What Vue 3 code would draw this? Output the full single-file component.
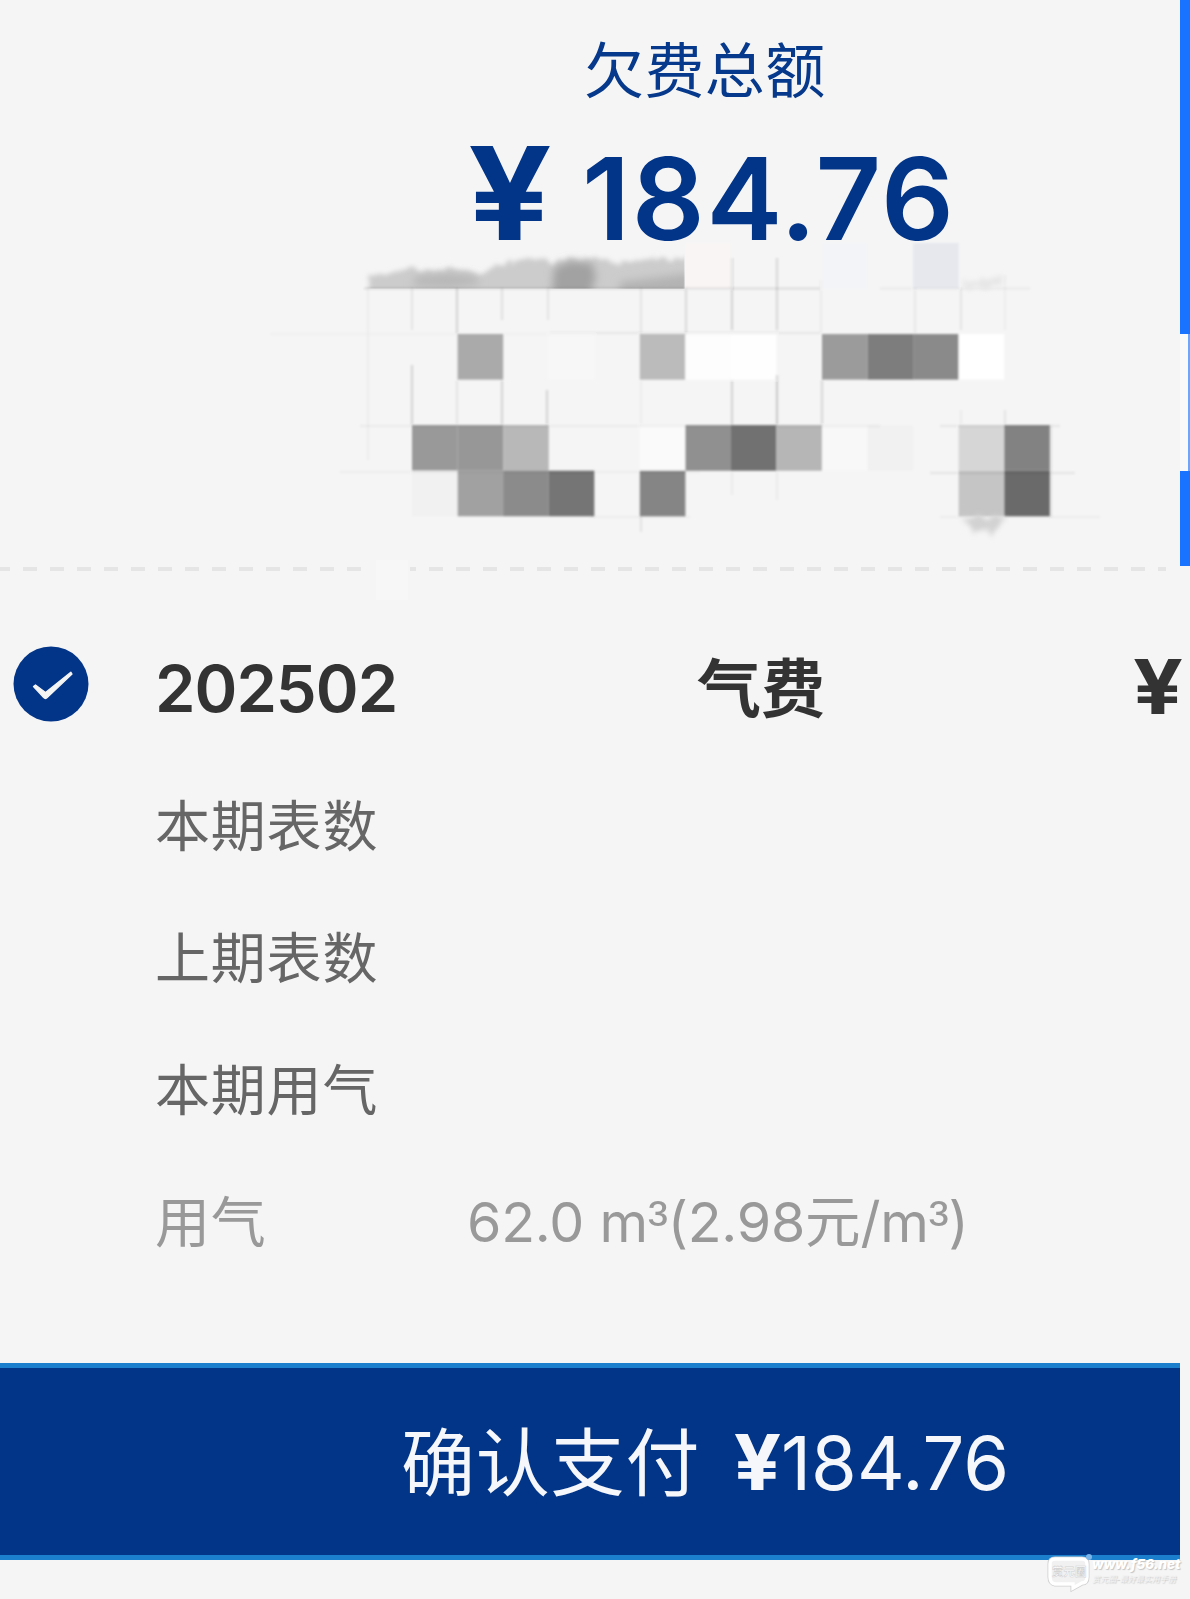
<script setup>
const cell = 45.55
const originX = 366.5
const originY = 288.5

// column, row, shade
const blocks = [
  [2, 1, '#aaaaaa'], [6, 1, '#bbbbbb'], [7, 1, '#fdfdfd'], [8, 1, '#fefefe'], [4, 1, '#f7f7f7'],
  [10, 1, '#9b9b9b'], [11, 1, '#7d7d7d'], [12, 1, '#8a8a8a'], [13, 1, '#ffffff'],
  [1, 3, '#999999'], [2, 3, '#979797'], [3, 3, '#b8b8b8'], [6, 3, '#fafafa'], [7, 3, '#909090'],
  [8, 3, '#717171'], [9, 3, '#b6b6b6'], [10, 3, '#f8f8f8'], [11, 3, '#f1f1f1'], [13, 3, '#d6d6d6'],
  [14, 3, '#828282'], [1, 4, '#f1f1f1'], [2, 4, '#a1a1a1'], [3, 4, '#8b8b8b'], [4, 4, '#747474'],
  [6, 4, '#858585'], [13, 4, '#c5c5c5'], [14, 4, '#6b6b6b'],
  [7, -1, '#f9f5f4'], [10, -1, '#f3f4f7'], [12, -1, '#e6e8ee'],
].map(([c, r, fill]) => ({ x: originX + c * cell, y: originY + r * cell, fill }))

// x1, y1, x2, y2, opacity
const seams = [
  [364, 288.5, 820, 288.5, 0.09], [880, 288.5, 1030, 288.5, 0.04], [550, 333, 820, 333, 0.05], [270, 334, 550, 334, 0.015],
  [360, 426, 880, 426, 0.04], [940, 426, 1060, 426, 0.05], [340, 472, 700, 472, 0.03],
  [930, 473, 1075, 473, 0.06], [590, 517, 690, 517, 0.03], [940, 517, 1100, 517, 0.03],
  [368, 288, 368, 460, 0.03], [412, 288, 412, 330, 0.06], [412, 365, 412, 425, 0.12],
  [457, 288, 457, 334, 0.12], [457, 380, 457, 425, 0.06], [502, 288, 502, 320, 0.08],
  [502, 380, 502, 425, 0.12], [548, 288, 548, 320, 0.06], [547, 390, 547, 425, 0.12],
  [641, 288, 641, 334, 0.06], [641, 380, 641, 425, 0.03], [641, 516, 641, 532, 0.07],
  [686, 288, 686, 334, 0.1], [732, 258, 732, 330, 0.13], [732, 380, 732, 425, 0.13],
  [777, 258, 777, 330, 0.11], [777, 375, 777, 425, 0.16], [821, 280, 821, 334, 0.04],
  [822, 380, 822, 425, 0.11], [915, 288, 915, 334, 0.05], [961, 288, 961, 330, 0.06],
  [1005, 275, 1005, 330, 0.03], [732, 471, 732, 495, 0.04], [777, 471, 777, 500, 0.04],
  [1051, 425, 1051, 517, 0.08], [1005, 410, 1005, 425, 0.06], [961, 410, 961, 425, 0.04],
]

const meterRows = ['本期表数', '上期表数', '本期用气']
</script>

<template>
  <div class="page">
    <main class="bill">
      <section class="summary">
        <div class="title">欠费总额</div>
        <div class="total"><span class="yen">¥</span><span class="sum">184.76</span></div>
        <svg class="mosaic" width="1180" height="330" viewBox="0 240 1180 330">
          <defs>
            <filter id="soft" x="-10%" y="-50%" width="120%" height="200%"><feGaussianBlur stdDeviation="4" /></filter>
            <filter id="rough" x="-10%" y="-50%" width="120%" height="200%">
              <feTurbulence type="fractalNoise" baseFrequency="0.12" numOctaves="3" seed="4" result="n" />
              <feDisplacementMap in="SourceGraphic" in2="n" scale="14" xChannelSelector="R" yChannelSelector="G" />
              <feGaussianBlur stdDeviation="2.4" />
            </filter>
            <filter id="edge"><feGaussianBlur stdDeviation="0.9" /></filter>
            <clipPath id="above"><rect x="360" y="245" width="324.5" height="43.5" /></clipPath>
          </defs>
          <g clip-path="url(#above)">
            <g filter="url(#rough)">
              <path d="M370 277l22-5 18-3 24 2 22-2 24 4 24-9 24-5 24 2 24-3 22 2 20 4 20-3 24-2 58 0v50H370z" fill="#cccccc" />
            </g>
            <g filter="url(#soft)">
              <path d="M416 276l30-3 30 3 4 8-30 4-38-2z" fill="#b8b8b8" />
              <path d="M554 268l16-7 22 2 4 14-6 18-38 0z" fill="#a2a2a2" />
              <path d="M620 282l80-10v24h-80z" fill="#b3b3b3" />
            </g>
          </g>
          <g filter="url(#edge)">
            <rect v-for="(b, i) in blocks" :key="i" :x="b.x" :y="b.y" width="45.6" height="45.6" :fill="b.fill" />
            <path v-for="(s, i) in seams" :key="'s' + i" :d="`M${s[0]} ${s[1]}L${s[2]} ${s[3]}`" stroke="#000" stroke-width="2.4" :stroke-opacity="s[4]" />
          </g>
          <g filter="url(#rough)" fill="#d2d2d2">
            <path d="M962 283l20-5 21-3v12h-41z" fill="#e6e6e6" />
            <path d="M962 517h42l-7 15-7 4-5-8-10 6-7-7z" />
          </g>
        </svg>
      </section>
      <svg class="rule" width="1180" height="44" viewBox="0 558 1180 44">
        <path d="M-4 569H361M410 569H416M429 569H1166" stroke="#e5e5e5" stroke-width="4" stroke-dasharray="14 13" />
        <rect x="376" y="560" width="32" height="40" fill="#f7f7f7" />
      </svg>
      <section class="period">
        <svg class="check" width="76" height="76" viewBox="0 0 76 76">
          <circle cx="38" cy="38" r="37.5" fill="#023488" />
          <path d="M20.5 40.5L22.5 39L32.5 46.6L57.8 26.2L59 28L34.2 51.6Q32.5 53.4 30.7 51.6Z" fill="#f5f5f5" stroke="#f5f5f5" stroke-width="1.3" stroke-linejoin="round" />
        </svg>
        <span class="month">202502</span>
        <span class="kind">气费</span>
        <span class="mark">¥</span>
      </section>
      <section class="details">
        <div v-for="row in meterRows" :key="row" class="row">{{ row }}</div>
        <div class="row usage"><span class="name">用气</span><span class="rate">62.0 m<span class="cube">³</span>(2.98元/m<span class="cube">³</span>)</span></div>
      </section>
      <button class="pay"><span class="action">确认支付</span><span class="pay-yen">¥</span><span class="pay-sum">184.76</span></button>
    </main>
    <aside class="rail">
      <i class="bar upper"></i>
      <i class="gap"></i>
      <i class="bar lower"></i>
    </aside>
    <div class="stamp">
      <svg width="44" height="36" viewBox="0 0 44 36">
        <path d="M7 3H34Q39 3 39 8V21Q39 27 34 27L25 32V28H7Q2 27 2 21V8Q2 3 7 3Z" fill="none" stroke="#cfcfcf" stroke-width="5" />
        <path d="M7 3H34Q39 3 39 8V21Q39 27 34 27L25 32V28H7Q2 27 2 21V8Q2 3 7 3Z" fill="#f1f1f1" stroke="#fff" stroke-width="3.4" />
        <circle cx="41" cy="1" r="3" fill="#7bb5ea" />
        <text x="4" y="20" font-size="11.5">赏元圈</text>
      </svg>
      <div class="site"><b>www.f56.net</b><small>赏元圈-最好最实用手册</small></div>
    </div>
  </div>
</template>

<style>
body { margin: 0; background: #f5f5f5; }
</style>

<style scoped>
.page { position: relative; display: flex; width: 1190px; height: 1599px; overflow: hidden; background: #f5f5f5; font-family: Inter, "Noto Sans CJK SC", sans-serif; }
.bill { width: 1180px; display: flex; flex-direction: column; }
.summary { height: 558px; display: flex; flex-direction: column; }
.title { margin: 26px 0 0 584px; height: 87px; line-height: 90px; font-size: 60px; letter-spacing: .4px; color: #06398b; white-space: nowrap; }
.total { height: 127px; display: flex; align-items: baseline; margin-left: 468px; line-height: 160px; color: #023488; white-space: nowrap; }
.yen { width: 114px; font-size: 129px; font-weight: 700; transform: scaleX(1.14); transform-origin: left; }
.sum { font-size: 114px; font-weight: 600; letter-spacing: 1.6px; }
.mosaic { flex: none; overflow: visible; }
.rule { flex: none; }
.period { height: 163px; display: flex; align-items: center; color: #333; font-weight: 600; white-space: nowrap; }
.check { margin-left: 13px; flex: none; }
.month { width: 542px; margin-left: 66px; padding-top: 10px; font-size: 65px; letter-spacing: -1px; }
.kind { width: 436px; font-size: 64px; font-weight: 700; padding-top: 1px; }
.mark { padding-top: 5px; font-size: 75px; font-weight: 700; transform: scaleX(1.17); transform-origin: left; }
.details { height: 598px; padding-left: 155px; box-sizing: border-box; }
.row { height: 132px; line-height: 122px; font-size: 55px; letter-spacing: .8px; color: #666; white-space: nowrap; }
.usage { display: flex; color: #999; }
.name { width: 312px; }
.rate { font-size: 55.5px; letter-spacing: -.2px; }
.cube { font-family: "Liberation Sans", sans-serif; font-size: 60px; line-height: 1; }
.pay { height: 197px; border: 0; border-top: 5px solid #1b7fce; border-bottom: 5px solid #1b7fce; background: #023488; color: #f5f7fb; font-family: inherit; display: flex; align-items: center; padding: 0 0 0 401px; white-space: nowrap; }
.action { font-size: 74px; width: 329px; text-align: left; letter-spacing: .8px; padding-bottom: 8px; }
.pay-yen { font-size: 77px; font-weight: 700; width: 51px; transform: scaleX(1.08); transform-origin: left; }
.pay-sum { font-size: 74px; padding-top: 2px; }
.rail { width: 10px; display: flex; flex-direction: column; }
.bar { background: #1a73ff; }
.upper { height: 334px; }
.gap { height: 137px; background: #f9f9f9; border-right: 2px solid #6aa5ff; }
.lower { height: 95px; }
.stamp { position: absolute; left: 1048px; top: 1556px; display: flex; font-style: italic; color: #fff; }
.stamp svg { overflow: visible; }
.stamp text { fill: #fff; stroke: #cfcfcf; stroke-width: .5; font-style: normal; font-weight: 700; }
.site { display: flex; flex-direction: column; text-shadow: 1px 1px 1px #c4c4c4; white-space: nowrap; }
.site b { font-size: 13.5px; line-height: 17px; font-weight: 800; }
.site small { font-size: 8px; line-height: 12px; color: #f2f2f2; }
</style>
